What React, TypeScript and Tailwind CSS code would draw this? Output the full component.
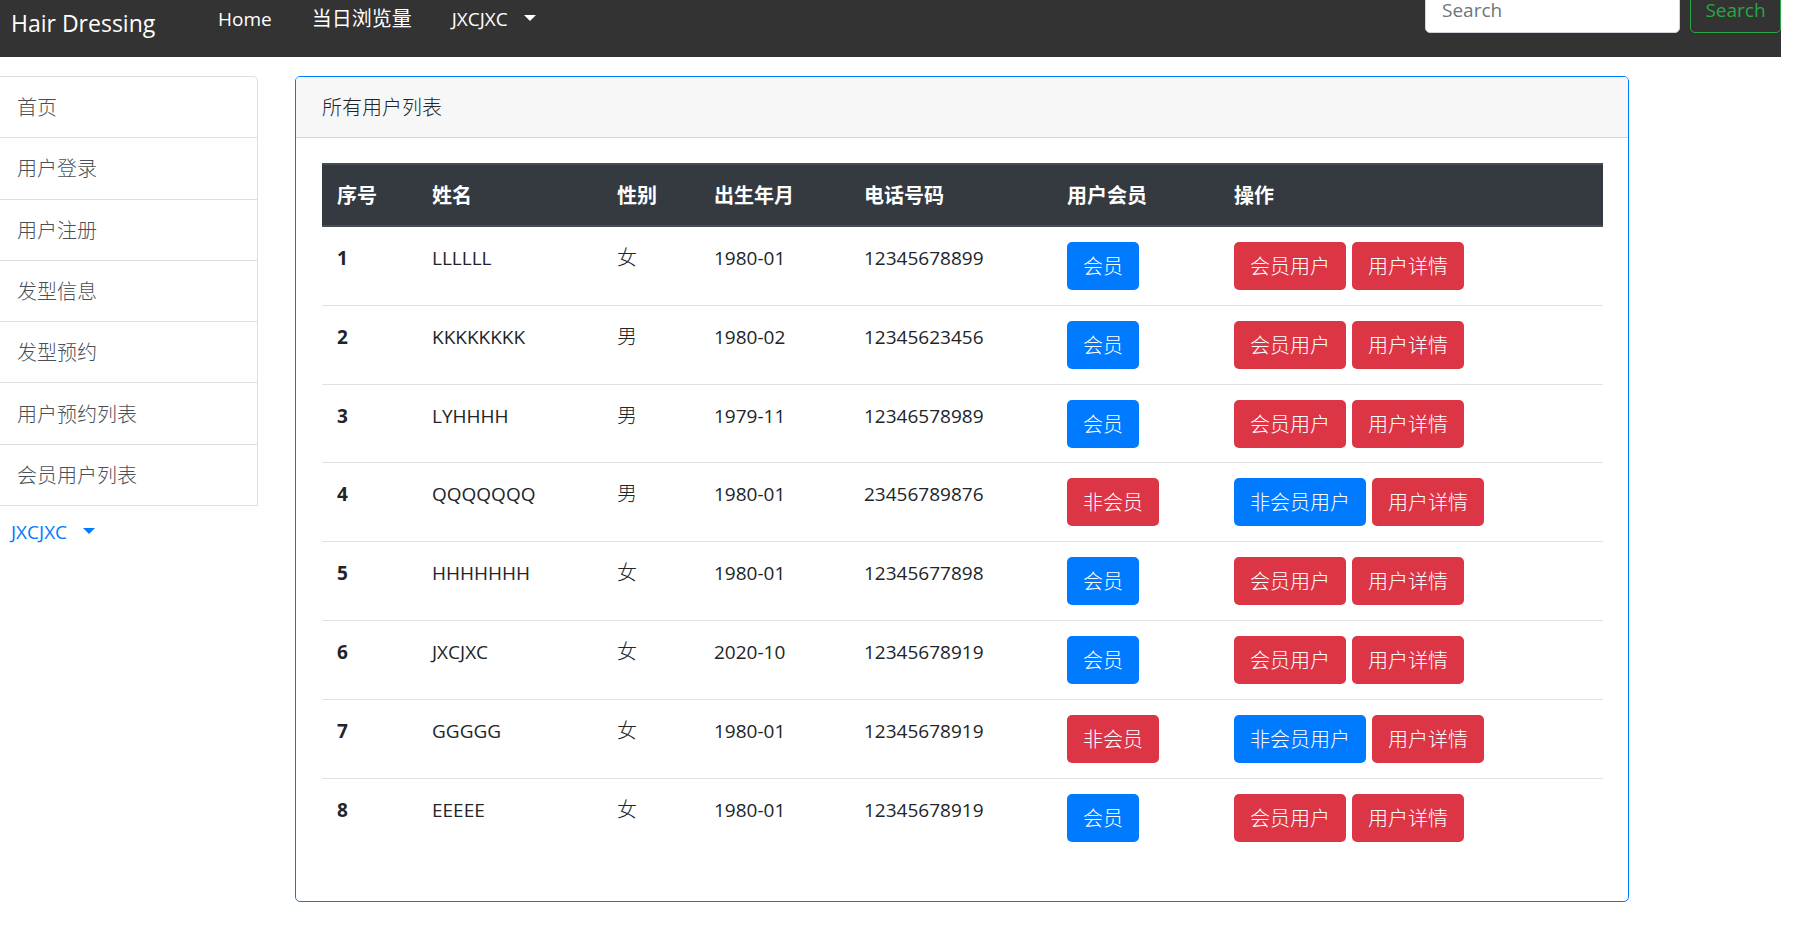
type User = {
  id: number;
  name: string;
  gender: string;
  birth: string;
  phone: string;
  member: boolean;
};

const users: User[] = [
  { id: 1, name: "LLLLLL", gender: "女", birth: "1980-01", phone: "12345678899", member: true },
  { id: 2, name: "KKKKKKKK", gender: "男", birth: "1980-02", phone: "12345623456", member: true },
  { id: 3, name: "LYHHHH", gender: "男", birth: "1979-11", phone: "12346578989", member: true },
  { id: 4, name: "QQQQQQQ", gender: "男", birth: "1980-01", phone: "23456789876", member: false },
  { id: 5, name: "HHHHHHH", gender: "女", birth: "1980-01", phone: "12345677898", member: true },
  { id: 6, name: "JXCJXC", gender: "女", birth: "2020-10", phone: "12345678919", member: true },
  { id: 7, name: "GGGGG", gender: "女", birth: "1980-01", phone: "12345678919", member: false },
  { id: 8, name: "EEEEE", gender: "女", birth: "1980-01", phone: "12345678919", member: true },
];

const menu = ["首页", "用户登录", "用户注册", "发型信息", "发型预约", "用户预约列表", "会员用户列表"];

const headings = ["序号", "姓名", "性别", "出生年月", "电话号码", "用户会员", "操作"];

function Caret() {
  return (
    <svg viewBox="0 0 12 6" className="ml-4 inline-block h-[6px] w-3 align-[5px]" aria-hidden="true">
      <path d="M0 0h12L6 6z" fill="currentColor" />
    </svg>
  );
}

function Button({ tone, children }: { tone: "blue" | "red"; children: string }) {
  return (
    <button
      type="button"
      className={
        tone === "blue"
          ? "h-12 rounded-[5px] bg-[#007bff] px-4 pt-0.5 text-[20px] leading-[30px] font-light whitespace-nowrap text-white"
          : "h-12 rounded-[5px] bg-[#dc3545] px-4 pt-0.5 text-[20px] leading-[30px] font-light whitespace-nowrap text-white"
      }
    >
      {children}
    </button>
  );
}

export default function App() {
  return (
    <div className="bg-white font-['Open_Sans','Noto_Sans_CJK_SC',sans-serif] text-[19px] leading-[30px] text-[#212529]">
      <header className="mr-[18px] flex h-[57px] items-start overflow-hidden bg-[#333333] text-white">
        <a href="#" className="ml-[11px] w-[207px] pt-2 text-[23px] leading-[30px]">
          Hair Dressing
        </a>
        <nav className="flex gap-10 pt-1">
          <a href="#">Home</a>
          <a href="#" className="text-[20px]">当日浏览量</a>
          <button type="button" className="leading-[30px]">
            JXCJXC
            <Caret />
          </button>
        </nav>
        <form className="-mt-[15px] ml-auto flex gap-[10px]">
          <input
            type="search"
            placeholder="Search"
            aria-label="Search"
            className="h-12 w-[255px] rounded-[5px] border border-[#ced4da] bg-white px-4 pt-0.5 text-[#495057] placeholder:text-[#6c757d]"
          />
          <button type="button" className="h-12 w-[91px] rounded-[5px] border border-[#28a745] pt-0.5 text-[#28a745]">
            Search
          </button>
        </form>
      </header>

      <div className="flex items-start pt-[19px] pr-[170px]">
        <aside className="mr-[37px] w-[258px] shrink-0">
          <ul className="grid min-h-[430px] auto-rows-fr rounded-tr-[5px] border-t border-r border-[#dfdfdf]">
            {menu.map((item) => (
              <li key={item} className="flex border-b border-[#dfdfdf]">
                <a href="#" className="flex flex-1 items-center px-[17px] pt-0.5 text-[20px] font-light text-[#495057]">
                  {item}
                </a>
              </li>
            ))}
          </ul>
          <button type="button" className="mt-[11px] ml-[11px] leading-[30px] text-[#007bff]">
            JXCJXC
            <Caret />
          </button>
        </aside>

        <section className="min-w-0 flex-1 rounded-[5px] border border-[#007bff]">
          <h1 className="rounded-t-[4px] border-b border-[#d8d8d8] bg-[#f7f7f7] px-[26px] pt-4 pb-[14px] text-[20px] font-light">
            所有用户列表
          </h1>
          <div className="pt-[25px] pr-[25px] pb-11 pl-[26px]">
            <table className="h-[694px] w-full table-fixed border-separate border-spacing-0 text-left">
              <colgroup>
                <col className="w-[95px]" />
                <col className="w-[185px]" />
                <col className="w-[97px]" />
                <col className="w-[150px]" />
                <col className="w-[203px]" />
                <col className="w-[167px]" />
                <col />
              </colgroup>
              <thead className="bg-[#343a40] text-white">
                <tr className="h-16">
                  {headings.map((h) => (
                    <th key={h} scope="col" className="border-y-2 border-[#454d55] px-[15px] pt-4 pb-[14px] text-[20px] font-bold">
                      {h}
                    </th>
                  ))}
                </tr>
              </thead>
              <tbody className="[&>tr+tr>*]:border-t [&>tr>*]:border-[#dee2e6] [&>tr>*]:px-[15px] [&>tr>*]:pt-[15px] [&>tr>*]:align-top [&>tr>*]:leading-8">
                {users.map((u) => (
                  <tr key={u.id}>
                    <th scope="row" className="font-bold">{u.id}</th>
                    <td>{u.name}</td>
                    <td className="text-[20px] font-light">{u.gender}</td>
                    <td>{u.birth}</td>
                    <td>{u.phone}</td>
                    <td>
                      <Button tone={u.member ? "blue" : "red"}>{u.member ? "会员" : "非会员"}</Button>
                    </td>
                    <td>
                      <div className="flex gap-[6px]">
                        <Button tone={u.member ? "red" : "blue"}>{u.member ? "会员用户" : "非会员用户"}</Button>
                        <Button tone="red">用户详情</Button>
                      </div>
                    </td>
                  </tr>
                ))}
              </tbody>
            </table>
          </div>
        </section>
      </div>
    </div>
  );
}
